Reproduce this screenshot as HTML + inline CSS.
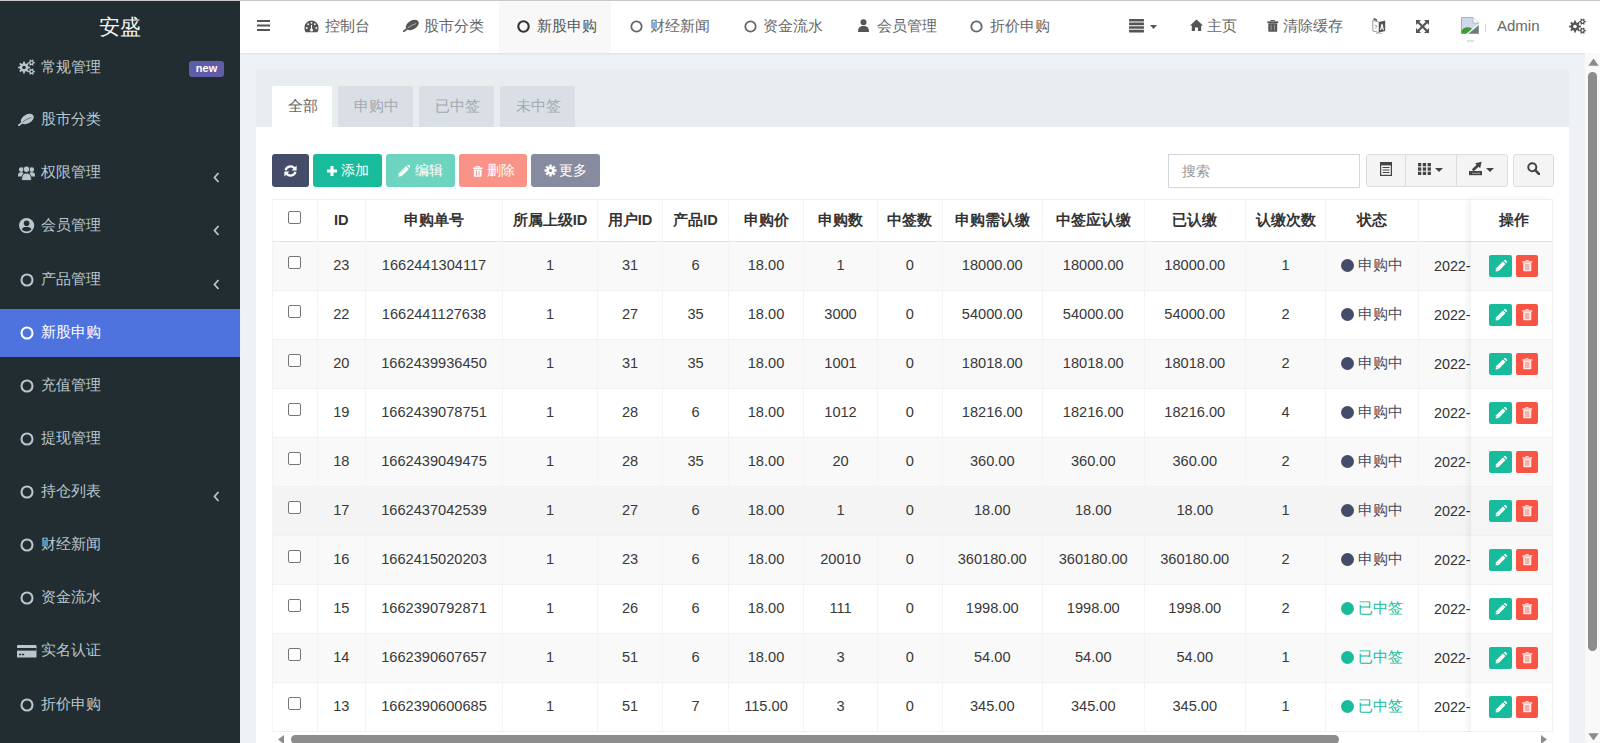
<!DOCTYPE html><html><head><meta charset="utf-8"><style>
*{box-sizing:border-box}
body{margin:0;width:1600px;height:743px;overflow:hidden;position:relative;background:#eef1f5;font-family:"Liberation Sans",sans-serif;color:#333}
.a{position:absolute}
.topline{left:0;top:0;width:1600px;height:1px;background:#c9c9c9;z-index:50}
#side{left:0;top:0;width:240px;height:743px;background:#222d32}
.logo{left:0;top:12px;width:240px;text-align:center;color:#f2f2f2;font-size:21px;line-height:28px}
.mi{left:0;width:240px;height:49px;color:#b8c7ce;font-size:15px;line-height:49px}
.mi.act{background:#4e73df;color:#fff}
.actbg{left:0;top:309px;width:240px;height:48px;background:#4e73df}
.mi.act{background:transparent}
.mi .ic{position:absolute;left:18px;top:0;height:49px;display:flex;align-items:center}
.mi .tx{position:absolute;left:41px;top:-1px}
.mi .chev{position:absolute;left:211px;top:0}
.badge{position:absolute;left:189px;top:18px;width:35px;height:16px;background:#605ca8;color:#fff;border-radius:3px;font-size:11px;font-weight:bold;line-height:15px;text-align:center}
#hdr{left:240px;top:0;width:1360px;height:53px;background:#fff;box-shadow:0 1px 2px rgba(0,0,0,.08)}
.hn{top:0;height:53px;line-height:52px;color:#666;font-size:15px}
.hn svg{position:absolute}
#panel{left:256px;top:69px;width:1313px;height:700px;background:#fff}
#ph{left:256px;top:69px;width:1313px;height:58px;background:#e8edf0}
.tab{top:86px;height:41px;background:#d9dfe4;color:#a0a9b1;border-radius:2px 2px 0 0;font-size:15px;line-height:39px;text-align:center;padding-left:2px}
.tab.act{background:#fff;color:#666}
.btn{top:154px;height:33px;border-radius:3px;color:#fff;font-size:14px;line-height:33px;text-align:center}
.cell{position:absolute;text-align:center;font-size:14.6px;color:#383838;transform:scaleY(1.06);transform-origin:50% 56%}
.hcell{position:absolute;text-align:center;font-size:14.6px;font-weight:bold;color:#333}
.vl{position:absolute;width:1px;background:#f4f4f4}
.hl{position:absolute;height:1px;background:#ebebeb}
</style></head><body>
<div class="a topline"></div>

<div class="a" id="side">
<div class="a logo" style="top:13px">安盛</div>
<div class="a actbg"></div>
<div class="a mi" style="top:42.5px"><span class="ic"><svg width="17" height="16" viewBox="0 0 17 16" style="margin-top:0px"><polygon points="10.20,7.58 11.94,7.68 11.94,9.32 10.20,9.42 9.62,10.82 10.78,12.12 9.62,13.28 8.32,12.12 6.92,12.70 6.82,14.44 5.18,14.44 5.08,12.70 3.68,12.12 2.38,13.28 1.22,12.12 2.38,10.82 1.80,9.42 0.06,9.32 0.06,7.68 1.80,7.58 2.38,6.18 1.22,4.88 2.38,3.72 3.68,4.88 5.08,4.30 5.18,2.56 6.82,2.56 6.92,4.30 8.32,4.88 9.62,3.72 10.78,4.88 9.62,6.18" fill="#b8c7ce"/><circle cx="6" cy="8.5" r="1.8" fill="#222d32"/><polygon points="15.80,2.92 16.84,2.98 16.84,4.22 15.80,4.28 15.24,5.25 15.71,6.19 14.63,6.80 14.06,5.93 12.94,5.93 12.37,6.80 11.29,6.19 11.76,5.25 11.20,4.28 10.16,4.22 10.16,2.98 11.20,2.92 11.76,1.95 11.29,1.01 12.37,0.40 12.94,1.27 14.06,1.27 14.63,0.40 15.71,1.01 15.24,1.95" fill="#b8c7ce"/><circle cx="13.5" cy="3.6" r="1.1" fill="#222d32"/><polygon points="15.80,11.92 16.84,11.98 16.84,13.22 15.80,13.28 15.24,14.25 15.71,15.19 14.63,15.80 14.06,14.93 12.94,14.93 12.37,15.80 11.29,15.19 11.76,14.25 11.20,13.28 10.16,13.22 10.16,11.98 11.20,11.92 11.76,10.95 11.29,10.01 12.37,9.40 12.94,10.27 14.06,10.27 14.63,9.40 15.71,10.01 15.24,10.95" fill="#b8c7ce"/><circle cx="13.5" cy="12.6" r="1.1" fill="#222d32"/></svg></span><span class="tx">常规管理</span>
<span class="badge">new</span>
</div>
<div class="a mi" style="top:94.5px"><span class="ic"><svg width="16" height="13" viewBox="0 0 16 13" style="margin-top:1px"><ellipse cx="9.3" cy="6" rx="7" ry="4.4" transform="rotate(-30 9.3 6)" fill="#b8c7ce"/><path d="M0.9 12.2 L4.5 9.4" stroke="#b8c7ce" stroke-width="1.8" stroke-linecap="round"/><path d="M4.6 9.2 C7.2 7 10 5.6 13.2 4.6" fill="none" stroke="#222d32" stroke-width="0.8" opacity="0.7"/></svg></span><span class="tx">股市分类</span>
</div>
<div class="a mi" style="top:147.5px"><span class="ic"><svg width="17" height="16" viewBox="0 0 17 16" style="margin-top:1px"><circle cx="3.2" cy="4.6" r="2.3" fill="#b8c7ce"/><circle cx="13.8" cy="4.6" r="2.3" fill="#b8c7ce"/><path d="M0 11.5 C0 8 1 7.3 3.2 7.3 C4.4 7.3 5 7.6 5.4 8 L4.2 11.5Z" fill="#b8c7ce"/><path d="M17 11.5 C17 8 16 7.3 13.8 7.3 C12.6 7.3 12 7.6 11.6 8 L12.8 11.5Z" fill="#b8c7ce"/><circle cx="8.5" cy="4.3" r="3.2" fill="#b8c7ce" stroke="#222d32" stroke-width="0.8"/><path d="M3.6 15.5 C3.6 10 5 8.2 8.5 8.2 C12 8.2 13.4 10 13.4 15.5Z" fill="#b8c7ce" stroke="#222d32" stroke-width="0.8"/></svg></span><span class="tx">权限管理</span>
<span class="chev"><svg width="10" height="49" viewBox="0 0 10 49"><path d="M7.5 25 L3.5 29.5 L7.5 34" transform="translate(0,0)" fill="none" stroke="#b8c7ce" stroke-width="1.8"/></svg></span>
</div>
<div class="a mi" style="top:200.5px"><span class="ic"><svg width="16" height="16" viewBox="0 0 16 16" style="margin-left:0.5px;margin-top:2px"><circle cx="7.6" cy="7.6" r="7.6" fill="#b8c7ce"/><circle cx="7.6" cy="5.3" r="2.8" fill="#222d32"/><path d="M2.9 11.3 C3.3 9.2 5 8.9 7.6 8.9 C10.2 8.9 11.9 9.2 12.3 11.3 C11.6 12.8 9.8 13.4 7.6 13.4 C5.4 13.4 3.6 12.8 2.9 11.3Z" fill="#222d32"/></svg></span><span class="tx">会员管理</span>
<span class="chev"><svg width="10" height="49" viewBox="0 0 10 49"><path d="M7.5 25 L3.5 29.5 L7.5 34" transform="translate(0,0)" fill="none" stroke="#b8c7ce" stroke-width="1.8"/></svg></span>
</div>
<div class="a mi" style="top:254.5px"><span class="ic"><svg width="14" height="14" viewBox="0 0 14 14" style="margin-left:1.5px;margin-top:2px"><circle cx="7" cy="7" r="5.5" fill="none" stroke="#b8c7ce" stroke-width="2.1"/></svg></span><span class="tx">产品管理</span>
<span class="chev"><svg width="10" height="49" viewBox="0 0 10 49"><path d="M7.5 25 L3.5 29.5 L7.5 34" transform="translate(0,0)" fill="none" stroke="#b8c7ce" stroke-width="1.8"/></svg></span>
</div>
<div class="a mi act" style="top:307.5px"><span class="ic"><svg width="14" height="14" viewBox="0 0 14 14" style="margin-left:1.5px;margin-top:2px"><circle cx="7" cy="7" r="5.5" fill="none" stroke="#fff" stroke-width="2.1"/></svg></span><span class="tx">新股申购</span>
</div>
<div class="a mi" style="top:360.5px"><span class="ic"><svg width="14" height="14" viewBox="0 0 14 14" style="margin-left:1.5px;margin-top:2px"><circle cx="7" cy="7" r="5.5" fill="none" stroke="#b8c7ce" stroke-width="2.1"/></svg></span><span class="tx">充值管理</span>
</div>
<div class="a mi" style="top:413.5px"><span class="ic"><svg width="14" height="14" viewBox="0 0 14 14" style="margin-left:1.5px;margin-top:2px"><circle cx="7" cy="7" r="5.5" fill="none" stroke="#b8c7ce" stroke-width="2.1"/></svg></span><span class="tx">提现管理</span>
</div>
<div class="a mi" style="top:466.5px"><span class="ic"><svg width="14" height="14" viewBox="0 0 14 14" style="margin-left:1.5px;margin-top:2px"><circle cx="7" cy="7" r="5.5" fill="none" stroke="#b8c7ce" stroke-width="2.1"/></svg></span><span class="tx">持仓列表</span>
<span class="chev"><svg width="10" height="49" viewBox="0 0 10 49"><path d="M7.5 25 L3.5 29.5 L7.5 34" transform="translate(0,0)" fill="none" stroke="#b8c7ce" stroke-width="1.8"/></svg></span>
</div>
<div class="a mi" style="top:519.5px"><span class="ic"><svg width="14" height="14" viewBox="0 0 14 14" style="margin-left:1.5px;margin-top:2px"><circle cx="7" cy="7" r="5.5" fill="none" stroke="#b8c7ce" stroke-width="2.1"/></svg></span><span class="tx">财经新闻</span>
</div>
<div class="a mi" style="top:572.5px"><span class="ic"><svg width="14" height="14" viewBox="0 0 14 14" style="margin-left:1.5px;margin-top:2px"><circle cx="7" cy="7" r="5.5" fill="none" stroke="#b8c7ce" stroke-width="2.1"/></svg></span><span class="tx">资金流水</span>
</div>
<div class="a mi" style="top:625.5px"><span class="ic"><svg width="20" height="13" viewBox="0 0 20 13" style="margin-left:-1.5px;margin-top:2px"><rect x="0" y="0" width="19.5" height="12.6" rx="1.2" fill="#b8c7ce"/><rect x="0" y="3" width="19.5" height="2.6" fill="#222d32"/><rect x="2" y="8.8" width="2.2" height="1.4" fill="#222d32"/><rect x="5" y="8.8" width="2.2" height="1.4" fill="#222d32"/></svg></span><span class="tx">实名认证</span>
</div>
<div class="a mi" style="top:679.5px"><span class="ic"><svg width="14" height="14" viewBox="0 0 14 14" style="margin-left:1.5px;margin-top:2px"><circle cx="7" cy="7" r="5.5" fill="none" stroke="#b8c7ce" stroke-width="2.1"/></svg></span><span class="tx">折价申购</span>
</div>
</div>
<div class="a" id="hdr"></div>
<svg class="a" style="left:257px;top:20px" width="13" height="11" viewBox="0 0 13 11"><rect y="0" width="13" height="2" fill="#555"/><rect y="4.5" width="13" height="2" fill="#555"/><rect y="9" width="13" height="2" fill="#555"/></svg>
<div class="a" style="left:499px;top:1px;width:112px;height:52px;background:#f8f8f8"></div>
<svg class="a" style="left:304px;top:20px" width="15" height="13" viewBox="0 0 15 13"><path d="M7.5 0.5 A7 7 0 0 0 0.5 7.5 A7 7 0 0 0 1.4 11.8 Q1.7 12.3 2.3 12.3 L12.7 12.3 Q13.3 12.3 13.6 11.8 A7 7 0 0 0 14.5 7.5 A7 7 0 0 0 7.5 0.5Z" fill="#555"/><circle cx="7.5" cy="10" r="1.5" fill="#fff"/><path d="M7.5 10 L7.5 5" stroke="#fff" stroke-width="1.1"/><circle cx="2.8" cy="8" r="0.9" fill="#fff"/><circle cx="4.2" cy="4.2" r="0.9" fill="#fff"/><circle cx="7.5" cy="2.8" r="0.9" fill="#fff"/><circle cx="10.8" cy="4.2" r="0.9" fill="#fff"/><circle cx="12.2" cy="8" r="0.9" fill="#fff"/></svg>
<div class="a hn" style="left:325px;color:#666">控制台</div>
<span class="a" style="left:403px;top:19px"><svg width="16" height="13" viewBox="0 0 16 13" style="display:block"><ellipse cx="9.3" cy="6" rx="7" ry="4.4" transform="rotate(-30 9.3 6)" fill="#555"/><path d="M0.9 12.2 L4.5 9.4" stroke="#555" stroke-width="1.8" stroke-linecap="round"/><path d="M4.6 9.2 C7.2 7 10 5.6 13.2 4.6" fill="none" stroke="#fff" stroke-width="0.8" opacity="0.7"/></svg></span>
<div class="a hn" style="left:424px;color:#666">股市分类</div>
<svg class="a" style="left:517.0px;top:19.5px" width="13" height="13" viewBox="0 0 13 13"><circle cx="6.5" cy="6.5" r="5.2" fill="none" stroke="#333" stroke-width="2.1"/></svg>
<div class="a hn" style="left:537px;color:#555">新股申购</div>
<svg class="a" style="left:629.5px;top:19.5px" width="13" height="13" viewBox="0 0 13 13"><circle cx="6.5" cy="6.5" r="5.2" fill="none" stroke="#666" stroke-width="1.8"/></svg>
<div class="a hn" style="left:650px;color:#666">财经新闻</div>
<svg class="a" style="left:743.5px;top:19.5px" width="13" height="13" viewBox="0 0 13 13"><circle cx="6.5" cy="6.5" r="5.2" fill="none" stroke="#666" stroke-width="1.8"/></svg>
<div class="a hn" style="left:763px;color:#666">资金流水</div>
<svg class="a" style="left:858px;top:19px" width="11" height="13" viewBox="0 0 11 13"><circle cx="5.5" cy="3.2" r="3" fill="#555"/><path d="M0 13 C0 8.5 2 7 5.5 7 C9 7 11 8.5 11 13Z" fill="#555"/></svg>
<div class="a hn" style="left:877px;color:#666">会员管理</div>
<svg class="a" style="left:969.5px;top:19.5px" width="13" height="13" viewBox="0 0 13 13"><circle cx="6.5" cy="6.5" r="5.2" fill="none" stroke="#666" stroke-width="1.8"/></svg>
<div class="a hn" style="left:990px;color:#666">折价申购</div>
<svg class="a" style="left:1128.5px;top:18.5px" width="15" height="14" viewBox="0 0 15 14"><g fill="#555"><rect y="0" width="15" height="2.6" rx="0.6"/><rect y="3.6" width="15" height="2.6" rx="0.6"/><rect y="7.2" width="15" height="2.6" rx="0.6"/><rect y="10.8" width="15" height="2.6" rx="0.6"/></g></svg>
<svg class="a" style="left:1150px;top:25px" width="7" height="4" viewBox="0 0 7 4"><path d="M0 0 L7 0 L3.5 4Z" fill="#555"/></svg>
<svg class="a" style="left:1190px;top:19px" width="13" height="12" viewBox="0 0 13 12"><path d="M6.5 0.5 L0 6.5 L1.8 6.5 L1.8 12 L5 12 L5 8.5 L8 8.5 L8 12 L11.2 12 L11.2 6.5 L13 6.5Z" fill="#555"/></svg>
<div class="a hn" style="left:1207px;color:#666">主页</div>
<svg class="a" style="left:1267px;top:20px" width="12" height="12" viewBox="0 0 12 12"><path d="M3.8 1.5 L3.8 0.4 L7.7 0.4 L7.7 1.5" fill="none" stroke="#555" stroke-width="1"/><rect x="0.3" y="1.4" width="11" height="1.6" fill="#555"/><path d="M1.3 3.2 L10.2 3.2 L10.2 11 Q10.2 11.8 9.4 11.8 L2.1 11.8 Q1.3 11.8 1.3 11Z" fill="#555"/><rect x="3.6" y="4.6" width="0.9" height="5.6" fill="#aaa"/><rect x="6.9" y="4.6" width="0.9" height="5.6" fill="#aaa"/></svg>
<div class="a hn" style="left:1283px;color:#666">清除缓存</div>
<svg class="a" style="left:1372px;top:18px" width="14" height="16" viewBox="0 0 14 16"><path d="M0.8 2.5 L7 4 L7 14.5 L0.8 13Z" fill="#fff" stroke="#9a9a9a" stroke-width="1"/><path d="M7 4 L13.2 2.5 L13.2 13 L7 14.5Z" fill="#555"/><path d="M1.5 0.8 L5 2.3" stroke="#555" stroke-width="1.6"/><path d="M2.5 7 L5 8 L3 10.5" fill="none" stroke="#9a9a9a" stroke-width="0.9"/><path d="M8.6 12 L10 6 L11.4 12 M9.1 10 L10.9 10" fill="none" stroke="#fff" stroke-width="1.1"/><path d="M4 15.5 Q7 16.5 10 15.5" fill="none" stroke="#aaa" stroke-width="0.8"/></svg>
<svg class="a" style="left:1416px;top:20px" width="13" height="13" viewBox="0 0 13 13"><g fill="#555"><path d="M0 0 L5 0 L3.3 1.7 L6.5 4.9 L9.7 1.7 L8 0 L13 0 L13 5 L11.3 3.3 L8.1 6.5 L11.3 9.7 L13 8 L13 13 L8 13 L9.7 11.3 L6.5 8.1 L3.3 11.3 L5 13 L0 13 L0 8 L1.7 9.7 L4.9 6.5 L1.7 3.3 L0 5Z"/></g></svg>
<svg class="a" style="left:1460px;top:16px" width="20" height="27" viewBox="0 0 20 27"><path d="M1.5 1.5 L13 1.5 L18.5 7 L18.5 17.5 L1.5 17.5Z" fill="#cdd9ec" stroke="#aab3bb" stroke-width="1"/><path d="M13 1.5 L13 7 L18.5 7" fill="#fff" stroke="#aab3bb" stroke-width="0.8"/><path d="M1.5 17.5 L1.5 14.5 C4 11 8 10.5 12 12.5 L8 17.5Z" fill="#3f9b35"/><path d="M8 17.5 L18.5 9 L18.5 17.5Z" fill="#6d7a80"/><path d="M6.5 18.5 L19 8" stroke="#eaf5e0" stroke-width="1.6"/><path d="M7 25 L14 25" stroke="#c9ced4" stroke-width="1.2"/></svg>
<div class="a" style="left:1485px;top:24px;width:1px;height:8px;background:#d6d6d6"></div>
<div class="a hn" style="left:1497px;color:#666">Admin</div>
<span class="a" style="left:1569px;top:18px"><svg width="17" height="16" viewBox="0 0 17 16" style="display:block"><polygon points="10.20,7.58 11.94,7.68 11.94,9.32 10.20,9.42 9.62,10.82 10.78,12.12 9.62,13.28 8.32,12.12 6.92,12.70 6.82,14.44 5.18,14.44 5.08,12.70 3.68,12.12 2.38,13.28 1.22,12.12 2.38,10.82 1.80,9.42 0.06,9.32 0.06,7.68 1.80,7.58 2.38,6.18 1.22,4.88 2.38,3.72 3.68,4.88 5.08,4.30 5.18,2.56 6.82,2.56 6.92,4.30 8.32,4.88 9.62,3.72 10.78,4.88 9.62,6.18" fill="#555"/><circle cx="6" cy="8.5" r="1.8" fill="#fff"/><polygon points="15.80,2.92 16.84,2.98 16.84,4.22 15.80,4.28 15.24,5.25 15.71,6.19 14.63,6.80 14.06,5.93 12.94,5.93 12.37,6.80 11.29,6.19 11.76,5.25 11.20,4.28 10.16,4.22 10.16,2.98 11.20,2.92 11.76,1.95 11.29,1.01 12.37,0.40 12.94,1.27 14.06,1.27 14.63,0.40 15.71,1.01 15.24,1.95" fill="#555"/><circle cx="13.5" cy="3.6" r="1.1" fill="#fff"/><polygon points="15.80,11.92 16.84,11.98 16.84,13.22 15.80,13.28 15.24,14.25 15.71,15.19 14.63,15.80 14.06,14.93 12.94,14.93 12.37,15.80 11.29,15.19 11.76,14.25 11.20,13.28 10.16,13.22 10.16,11.98 11.20,11.92 11.76,10.95 11.29,10.01 12.37,9.40 12.94,10.27 14.06,10.27 14.63,9.40 15.71,10.01 15.24,10.95" fill="#555"/><circle cx="13.5" cy="12.6" r="1.1" fill="#fff"/></svg></span>
<div class="a" id="panel"></div><div class="a" id="ph"></div>
<div class="a tab act" style="left:272px;width:60px">全部</div>
<div class="a tab" style="left:338px;width:75px">申购中</div>
<div class="a tab" style="left:419px;width:75px">已中签</div>
<div class="a tab" style="left:500px;width:75px">未中签</div>
<div class="a btn" style="left:272px;width:37px;background:#444c69"><svg style="position:absolute;left:12px;top:10.5px" width="13" height="12" viewBox="0 0 13 12"><path d="M1.6 5.2 A5 4.8 0 0 1 10.4 3.2" fill="none" stroke="#fff" stroke-width="2.3"/><path d="M12.6 0.4 L12.6 5.4 L7.6 5.4Z" fill="#fff"/><path d="M11.4 6.8 A5 4.8 0 0 1 2.6 8.8" fill="none" stroke="#fff" stroke-width="2.3"/><path d="M0.4 11.6 L0.4 6.6 L5.4 6.6Z" fill="#fff"/></svg></div>
<div class="a btn" style="left:313px;width:69px;background:#18bc9c"><svg style="position:absolute;left:14px;top:12px" width="10" height="10" viewBox="0 0 10 10"><path d="M3.5 0 L6.5 0 L6.5 3.5 L10 3.5 L10 6.5 L6.5 6.5 L6.5 10 L3.5 10 L3.5 6.5 L0 6.5 L0 3.5 L3.5 3.5Z" fill="#fff"/></svg><span style="position:absolute;left:28px">添加</span></div>
<div class="a btn" style="left:386px;width:69px;background:#6dd4c0"><svg style="position:absolute;left:12px;top:11px" width="12" height="12" viewBox="0 0 12 12"><path d="M0.3 11.7 L0.9 8.2 L8 1.1 L10.9 4 L3.8 11.1Z" fill="#fff"/><path d="M8.9 0.2 L9.6 -0.5 Q10.2 -0.9 10.8 -0.3 L12.3 1.2 Q12.9 1.8 12.5 2.4 L11.8 3.1Z" fill="#fff"/><path d="M2 8.6 L8.2 2.4" stroke="#6dd4c0" stroke-width="0.6"/></svg><span style="position:absolute;left:29px">编辑</span></div>
<div class="a btn" style="left:459px;width:68px;background:#f99287"><svg style="position:absolute;left:13.5px;top:11.5px" width="10" height="11" viewBox="0 0 10 11"><path d="M3 1.6 L3 0.3 L6.5 0.3 L6.5 1.6" fill="none" stroke="#fff" stroke-width="1"/><rect x="0" y="1.5" width="9.5" height="1.5" fill="#fff"/><path d="M0.9 3.4 L8.6 3.4 L8.6 10 Q8.6 10.8 7.8 10.8 L1.7 10.8 Q0.9 10.8 0.9 10Z" fill="#fff"/><rect x="3" y="4.6" width="0.9" height="5" fill="#f99287"/><rect x="5.6" y="4.6" width="0.9" height="5" fill="#f99287"/></svg><span style="position:absolute;left:27.5px">删除</span></div>
<div class="a btn" style="left:531px;width:69px;background:#878b9f"><svg style="position:absolute;left:13px;top:10px" width="13" height="13" viewBox="0 0 13 13"><g stroke="#fff" stroke-width="2.4"><line x1="6.5" y1="0.5" x2="6.5" y2="12.5"/><line x1="0.5" y1="6.5" x2="12.5" y2="6.5"/><line x1="2.3" y1="2.3" x2="10.7" y2="10.7"/><line x1="10.7" y1="2.3" x2="2.3" y2="10.7"/></g><circle cx="6.5" cy="6.5" r="3.8" fill="#fff"/><circle cx="6.5" cy="6.5" r="1.6" fill="#878b9f"/></svg><span style="position:absolute;left:28px">更多</span></div>
<div class="a" style="left:1168px;top:154px;width:192px;height:34px;border:1px solid #d2d6de;background:#fff;color:#999;font-size:14px;line-height:33px;padding-left:13px">搜索</div>
<div class="a" style="left:1366px;top:154px;width:142px;height:33px;border:1px solid #ddd;border-radius:3px;background:#f4f4f4"></div>
<div class="a" style="left:1405px;top:154px;width:1px;height:33px;background:#ddd"></div><div class="a" style="left:1456px;top:154px;width:1px;height:33px;background:#ddd"></div>
<div class="a" style="left:1513px;top:154px;width:41px;height:33px;border:1px solid #ddd;border-radius:3px;background:#f4f4f4"></div>
<svg class="a" style="left:1380px;top:162px" width="12" height="14" viewBox="0 0 12 14"><rect x="0.6" y="0.6" width="10.8" height="12.8" fill="none" stroke="#444" stroke-width="1.2"/><rect x="0.6" y="0.6" width="10.8" height="2.8" fill="#444"/><g fill="#444"><rect x="2.5" y="5" width="7" height="1"/><rect x="2.5" y="7.5" width="7" height="1"/><rect x="2.5" y="10" width="7" height="1"/></g></svg>
<svg class="a" style="left:1418px;top:163px" width="13" height="12" viewBox="0 0 13 12"><g fill="#444"><rect x="0" y="0" width="3.3" height="3.3"/><rect x="4.8" y="0" width="3.3" height="3.3"/><rect x="9.6" y="0" width="3.3" height="3.3"/><rect x="0" y="4.4" width="3.3" height="3.3"/><rect x="4.8" y="4.4" width="3.3" height="3.3"/><rect x="9.6" y="4.4" width="3.3" height="3.3"/><rect x="0" y="8.7" width="3.3" height="3.3"/><rect x="4.8" y="8.7" width="3.3" height="3.3"/><rect x="9.6" y="8.7" width="3.3" height="3.3"/></g></svg>
<svg class="a" style="left:1435px;top:168px" width="8" height="4" viewBox="0 0 8 4"><path d="M0 0 L8 0 L4 4Z" fill="#444"/></svg>
<svg class="a" style="left:1469px;top:161px" width="14" height="15" viewBox="0 0 14 15"><g fill="#444"><rect x="0" y="10" width="13" height="4.2"/><path d="M2.8 8.6 L7.6 3.8 L6.2 2.2 L12.6 0.8 L11.2 7.2 L9.6 5.8 L4.8 10.2Z"/></g><rect x="3" y="11.8" width="8" height="0.9" fill="#aaa"/></svg>
<svg class="a" style="left:1486px;top:168px" width="8" height="4" viewBox="0 0 8 4"><path d="M0 0 L8 0 L4 4Z" fill="#444"/></svg>
<svg class="a" style="left:1527px;top:162px" width="13" height="13" viewBox="0 0 13 13"><circle cx="5.3" cy="5.3" r="4" fill="none" stroke="#444" stroke-width="2"/><path d="M8.2 8.2 L12 12" stroke="#444" stroke-width="2.6" stroke-linecap="round"/></svg>
<div class="a" style="left:272px;top:199px;width:1281px;height:1px;background:#efefef"></div>
<div class="a" style="left:272px;top:241px;width:1281px;height:1px;background:#e2e2e2"></div>
<div class="a" style="left:272px;top:242px;width:1281px;height:48px;background:#f9f9f9"></div>
<div class="a" style="left:272px;top:290px;width:1281px;height:1px;background:#f1f1f1"></div>
<div class="a" style="left:272px;top:291px;width:1281px;height:48px;background:#fff"></div>
<div class="a" style="left:272px;top:339px;width:1281px;height:1px;background:#f1f1f1"></div>
<div class="a" style="left:272px;top:340px;width:1281px;height:48px;background:#f9f9f9"></div>
<div class="a" style="left:272px;top:388px;width:1281px;height:1px;background:#f1f1f1"></div>
<div class="a" style="left:272px;top:389px;width:1281px;height:48px;background:#fff"></div>
<div class="a" style="left:272px;top:437px;width:1281px;height:1px;background:#f1f1f1"></div>
<div class="a" style="left:272px;top:438px;width:1281px;height:48px;background:#f9f9f9"></div>
<div class="a" style="left:272px;top:486px;width:1281px;height:1px;background:#f1f1f1"></div>
<div class="a" style="left:272px;top:487px;width:1281px;height:48px;background:#f4f4f4"></div>
<div class="a" style="left:272px;top:535px;width:1281px;height:1px;background:#f1f1f1"></div>
<div class="a" style="left:272px;top:536px;width:1281px;height:48px;background:#f9f9f9"></div>
<div class="a" style="left:272px;top:584px;width:1281px;height:1px;background:#f1f1f1"></div>
<div class="a" style="left:272px;top:585px;width:1281px;height:48px;background:#fff"></div>
<div class="a" style="left:272px;top:633px;width:1281px;height:1px;background:#f1f1f1"></div>
<div class="a" style="left:272px;top:634px;width:1281px;height:48px;background:#f9f9f9"></div>
<div class="a" style="left:272px;top:682px;width:1281px;height:1px;background:#f1f1f1"></div>
<div class="a" style="left:272px;top:683px;width:1281px;height:48px;background:#fff"></div>
<div class="a" style="left:272px;top:731px;width:1281px;height:1px;background:#f1f1f1"></div>
<div class="a vl" style="left:272px;top:199px;height:544px"></div>
<div class="a vl" style="left:317px;top:199px;height:544px"></div>
<div class="a vl" style="left:365px;top:199px;height:544px"></div>
<div class="a vl" style="left:502px;top:199px;height:544px"></div>
<div class="a vl" style="left:597px;top:199px;height:544px"></div>
<div class="a vl" style="left:662px;top:199px;height:544px"></div>
<div class="a vl" style="left:728px;top:199px;height:544px"></div>
<div class="a vl" style="left:803px;top:199px;height:544px"></div>
<div class="a vl" style="left:877px;top:199px;height:544px"></div>
<div class="a vl" style="left:942px;top:199px;height:544px"></div>
<div class="a vl" style="left:1042px;top:199px;height:544px"></div>
<div class="a vl" style="left:1144px;top:199px;height:544px"></div>
<div class="a vl" style="left:1245px;top:199px;height:544px"></div>
<div class="a vl" style="left:1325px;top:199px;height:544px"></div>
<div class="a vl" style="left:1418px;top:199px;height:544px"></div>
<div class="a" style="left:288px;top:211px;width:13px;height:13px;border:1px solid #767676;border-radius:2px;background:#fff"></div>
<div class="hcell" style="left:317px;width:48.5px;top:199px;height:42px;line-height:42px">ID</div>
<div class="hcell" style="left:365.5px;width:137.0px;top:199px;height:42px;line-height:42px">申购单号</div>
<div class="hcell" style="left:502.5px;width:95.0px;top:199px;height:42px;line-height:42px">所属上级ID</div>
<div class="hcell" style="left:597.5px;width:65.0px;top:199px;height:42px;line-height:42px">用户ID</div>
<div class="hcell" style="left:662.5px;width:66.0px;top:199px;height:42px;line-height:42px">产品ID</div>
<div class="hcell" style="left:728.5px;width:75.0px;top:199px;height:42px;line-height:42px">申购价</div>
<div class="hcell" style="left:803.5px;width:74.0px;top:199px;height:42px;line-height:42px">申购数</div>
<div class="hcell" style="left:877.5px;width:64.5px;top:199px;height:42px;line-height:42px">中签数</div>
<div class="hcell" style="left:942px;width:100.5px;top:199px;height:42px;line-height:42px">申购需认缴</div>
<div class="hcell" style="left:1042.5px;width:101.5px;top:199px;height:42px;line-height:42px">中签应认缴</div>
<div class="hcell" style="left:1144px;width:101.5px;top:199px;height:42px;line-height:42px">已认缴</div>
<div class="hcell" style="left:1245.5px;width:80.0px;top:199px;height:42px;line-height:42px">认缴次数</div>
<div class="hcell" style="left:1325.5px;width:92.5px;top:199px;height:42px;line-height:42px">状态</div>
<div class="a" style="left:288px;top:256px;width:13px;height:13px;border:1px solid #767676;border-radius:2px;background:#fff"></div>
<div class="cell" style="left:317px;width:48.5px;top:241px;height:48px;line-height:48px">23</div>
<div class="cell" style="left:365.5px;width:137.0px;top:241px;height:48px;line-height:48px">1662441304117</div>
<div class="cell" style="left:502.5px;width:95.0px;top:241px;height:48px;line-height:48px">1</div>
<div class="cell" style="left:597.5px;width:65.0px;top:241px;height:48px;line-height:48px">31</div>
<div class="cell" style="left:662.5px;width:66.0px;top:241px;height:48px;line-height:48px">6</div>
<div class="cell" style="left:728.5px;width:75.0px;top:241px;height:48px;line-height:48px">18.00</div>
<div class="cell" style="left:803.5px;width:74.0px;top:241px;height:48px;line-height:48px">1</div>
<div class="cell" style="left:877.5px;width:64.5px;top:241px;height:48px;line-height:48px">0</div>
<div class="cell" style="left:942px;width:100.5px;top:241px;height:48px;line-height:48px">18000.00</div>
<div class="cell" style="left:1042.5px;width:101.5px;top:241px;height:48px;line-height:48px">18000.00</div>
<div class="cell" style="left:1144px;width:101.5px;top:241px;height:48px;line-height:48px">18000.00</div>
<div class="cell" style="left:1245.5px;width:80.0px;top:241px;height:48px;line-height:48px">1</div>
<div class="a" style="left:1341px;top:259px;width:13px;height:13px;border-radius:50%;background:#444c69"></div>
<div class="a" style="left:1358px;top:240.5px;line-height:48px;font-size:15.3px;color:#474b5c">申购中</div>
<div class="a" style="left:1434px;top:242px;line-height:48px;font-size:14.3px;color:#333">2022-</div>
<div class="a" style="left:288px;top:305px;width:13px;height:13px;border:1px solid #767676;border-radius:2px;background:#fff"></div>
<div class="cell" style="left:317px;width:48.5px;top:290px;height:48px;line-height:48px">22</div>
<div class="cell" style="left:365.5px;width:137.0px;top:290px;height:48px;line-height:48px">1662441127638</div>
<div class="cell" style="left:502.5px;width:95.0px;top:290px;height:48px;line-height:48px">1</div>
<div class="cell" style="left:597.5px;width:65.0px;top:290px;height:48px;line-height:48px">27</div>
<div class="cell" style="left:662.5px;width:66.0px;top:290px;height:48px;line-height:48px">35</div>
<div class="cell" style="left:728.5px;width:75.0px;top:290px;height:48px;line-height:48px">18.00</div>
<div class="cell" style="left:803.5px;width:74.0px;top:290px;height:48px;line-height:48px">3000</div>
<div class="cell" style="left:877.5px;width:64.5px;top:290px;height:48px;line-height:48px">0</div>
<div class="cell" style="left:942px;width:100.5px;top:290px;height:48px;line-height:48px">54000.00</div>
<div class="cell" style="left:1042.5px;width:101.5px;top:290px;height:48px;line-height:48px">54000.00</div>
<div class="cell" style="left:1144px;width:101.5px;top:290px;height:48px;line-height:48px">54000.00</div>
<div class="cell" style="left:1245.5px;width:80.0px;top:290px;height:48px;line-height:48px">2</div>
<div class="a" style="left:1341px;top:308px;width:13px;height:13px;border-radius:50%;background:#444c69"></div>
<div class="a" style="left:1358px;top:289.5px;line-height:48px;font-size:15.3px;color:#474b5c">申购中</div>
<div class="a" style="left:1434px;top:291px;line-height:48px;font-size:14.3px;color:#333">2022-</div>
<div class="a" style="left:288px;top:354px;width:13px;height:13px;border:1px solid #767676;border-radius:2px;background:#fff"></div>
<div class="cell" style="left:317px;width:48.5px;top:339px;height:48px;line-height:48px">20</div>
<div class="cell" style="left:365.5px;width:137.0px;top:339px;height:48px;line-height:48px">1662439936450</div>
<div class="cell" style="left:502.5px;width:95.0px;top:339px;height:48px;line-height:48px">1</div>
<div class="cell" style="left:597.5px;width:65.0px;top:339px;height:48px;line-height:48px">31</div>
<div class="cell" style="left:662.5px;width:66.0px;top:339px;height:48px;line-height:48px">35</div>
<div class="cell" style="left:728.5px;width:75.0px;top:339px;height:48px;line-height:48px">18.00</div>
<div class="cell" style="left:803.5px;width:74.0px;top:339px;height:48px;line-height:48px">1001</div>
<div class="cell" style="left:877.5px;width:64.5px;top:339px;height:48px;line-height:48px">0</div>
<div class="cell" style="left:942px;width:100.5px;top:339px;height:48px;line-height:48px">18018.00</div>
<div class="cell" style="left:1042.5px;width:101.5px;top:339px;height:48px;line-height:48px">18018.00</div>
<div class="cell" style="left:1144px;width:101.5px;top:339px;height:48px;line-height:48px">18018.00</div>
<div class="cell" style="left:1245.5px;width:80.0px;top:339px;height:48px;line-height:48px">2</div>
<div class="a" style="left:1341px;top:357px;width:13px;height:13px;border-radius:50%;background:#444c69"></div>
<div class="a" style="left:1358px;top:338.5px;line-height:48px;font-size:15.3px;color:#474b5c">申购中</div>
<div class="a" style="left:1434px;top:340px;line-height:48px;font-size:14.3px;color:#333">2022-</div>
<div class="a" style="left:288px;top:403px;width:13px;height:13px;border:1px solid #767676;border-radius:2px;background:#fff"></div>
<div class="cell" style="left:317px;width:48.5px;top:388px;height:48px;line-height:48px">19</div>
<div class="cell" style="left:365.5px;width:137.0px;top:388px;height:48px;line-height:48px">1662439078751</div>
<div class="cell" style="left:502.5px;width:95.0px;top:388px;height:48px;line-height:48px">1</div>
<div class="cell" style="left:597.5px;width:65.0px;top:388px;height:48px;line-height:48px">28</div>
<div class="cell" style="left:662.5px;width:66.0px;top:388px;height:48px;line-height:48px">6</div>
<div class="cell" style="left:728.5px;width:75.0px;top:388px;height:48px;line-height:48px">18.00</div>
<div class="cell" style="left:803.5px;width:74.0px;top:388px;height:48px;line-height:48px">1012</div>
<div class="cell" style="left:877.5px;width:64.5px;top:388px;height:48px;line-height:48px">0</div>
<div class="cell" style="left:942px;width:100.5px;top:388px;height:48px;line-height:48px">18216.00</div>
<div class="cell" style="left:1042.5px;width:101.5px;top:388px;height:48px;line-height:48px">18216.00</div>
<div class="cell" style="left:1144px;width:101.5px;top:388px;height:48px;line-height:48px">18216.00</div>
<div class="cell" style="left:1245.5px;width:80.0px;top:388px;height:48px;line-height:48px">4</div>
<div class="a" style="left:1341px;top:406px;width:13px;height:13px;border-radius:50%;background:#444c69"></div>
<div class="a" style="left:1358px;top:387.5px;line-height:48px;font-size:15.3px;color:#474b5c">申购中</div>
<div class="a" style="left:1434px;top:389px;line-height:48px;font-size:14.3px;color:#333">2022-</div>
<div class="a" style="left:288px;top:452px;width:13px;height:13px;border:1px solid #767676;border-radius:2px;background:#fff"></div>
<div class="cell" style="left:317px;width:48.5px;top:437px;height:48px;line-height:48px">18</div>
<div class="cell" style="left:365.5px;width:137.0px;top:437px;height:48px;line-height:48px">1662439049475</div>
<div class="cell" style="left:502.5px;width:95.0px;top:437px;height:48px;line-height:48px">1</div>
<div class="cell" style="left:597.5px;width:65.0px;top:437px;height:48px;line-height:48px">28</div>
<div class="cell" style="left:662.5px;width:66.0px;top:437px;height:48px;line-height:48px">35</div>
<div class="cell" style="left:728.5px;width:75.0px;top:437px;height:48px;line-height:48px">18.00</div>
<div class="cell" style="left:803.5px;width:74.0px;top:437px;height:48px;line-height:48px">20</div>
<div class="cell" style="left:877.5px;width:64.5px;top:437px;height:48px;line-height:48px">0</div>
<div class="cell" style="left:942px;width:100.5px;top:437px;height:48px;line-height:48px">360.00</div>
<div class="cell" style="left:1042.5px;width:101.5px;top:437px;height:48px;line-height:48px">360.00</div>
<div class="cell" style="left:1144px;width:101.5px;top:437px;height:48px;line-height:48px">360.00</div>
<div class="cell" style="left:1245.5px;width:80.0px;top:437px;height:48px;line-height:48px">2</div>
<div class="a" style="left:1341px;top:455px;width:13px;height:13px;border-radius:50%;background:#444c69"></div>
<div class="a" style="left:1358px;top:436.5px;line-height:48px;font-size:15.3px;color:#474b5c">申购中</div>
<div class="a" style="left:1434px;top:438px;line-height:48px;font-size:14.3px;color:#333">2022-</div>
<div class="a" style="left:288px;top:501px;width:13px;height:13px;border:1px solid #767676;border-radius:2px;background:#fff"></div>
<div class="cell" style="left:317px;width:48.5px;top:486px;height:48px;line-height:48px">17</div>
<div class="cell" style="left:365.5px;width:137.0px;top:486px;height:48px;line-height:48px">1662437042539</div>
<div class="cell" style="left:502.5px;width:95.0px;top:486px;height:48px;line-height:48px">1</div>
<div class="cell" style="left:597.5px;width:65.0px;top:486px;height:48px;line-height:48px">27</div>
<div class="cell" style="left:662.5px;width:66.0px;top:486px;height:48px;line-height:48px">6</div>
<div class="cell" style="left:728.5px;width:75.0px;top:486px;height:48px;line-height:48px">18.00</div>
<div class="cell" style="left:803.5px;width:74.0px;top:486px;height:48px;line-height:48px">1</div>
<div class="cell" style="left:877.5px;width:64.5px;top:486px;height:48px;line-height:48px">0</div>
<div class="cell" style="left:942px;width:100.5px;top:486px;height:48px;line-height:48px">18.00</div>
<div class="cell" style="left:1042.5px;width:101.5px;top:486px;height:48px;line-height:48px">18.00</div>
<div class="cell" style="left:1144px;width:101.5px;top:486px;height:48px;line-height:48px">18.00</div>
<div class="cell" style="left:1245.5px;width:80.0px;top:486px;height:48px;line-height:48px">1</div>
<div class="a" style="left:1341px;top:504px;width:13px;height:13px;border-radius:50%;background:#444c69"></div>
<div class="a" style="left:1358px;top:485.5px;line-height:48px;font-size:15.3px;color:#474b5c">申购中</div>
<div class="a" style="left:1434px;top:487px;line-height:48px;font-size:14.3px;color:#333">2022-</div>
<div class="a" style="left:288px;top:550px;width:13px;height:13px;border:1px solid #767676;border-radius:2px;background:#fff"></div>
<div class="cell" style="left:317px;width:48.5px;top:535px;height:48px;line-height:48px">16</div>
<div class="cell" style="left:365.5px;width:137.0px;top:535px;height:48px;line-height:48px">1662415020203</div>
<div class="cell" style="left:502.5px;width:95.0px;top:535px;height:48px;line-height:48px">1</div>
<div class="cell" style="left:597.5px;width:65.0px;top:535px;height:48px;line-height:48px">23</div>
<div class="cell" style="left:662.5px;width:66.0px;top:535px;height:48px;line-height:48px">6</div>
<div class="cell" style="left:728.5px;width:75.0px;top:535px;height:48px;line-height:48px">18.00</div>
<div class="cell" style="left:803.5px;width:74.0px;top:535px;height:48px;line-height:48px">20010</div>
<div class="cell" style="left:877.5px;width:64.5px;top:535px;height:48px;line-height:48px">0</div>
<div class="cell" style="left:942px;width:100.5px;top:535px;height:48px;line-height:48px">360180.00</div>
<div class="cell" style="left:1042.5px;width:101.5px;top:535px;height:48px;line-height:48px">360180.00</div>
<div class="cell" style="left:1144px;width:101.5px;top:535px;height:48px;line-height:48px">360180.00</div>
<div class="cell" style="left:1245.5px;width:80.0px;top:535px;height:48px;line-height:48px">2</div>
<div class="a" style="left:1341px;top:553px;width:13px;height:13px;border-radius:50%;background:#444c69"></div>
<div class="a" style="left:1358px;top:534.5px;line-height:48px;font-size:15.3px;color:#474b5c">申购中</div>
<div class="a" style="left:1434px;top:536px;line-height:48px;font-size:14.3px;color:#333">2022-</div>
<div class="a" style="left:288px;top:599px;width:13px;height:13px;border:1px solid #767676;border-radius:2px;background:#fff"></div>
<div class="cell" style="left:317px;width:48.5px;top:584px;height:48px;line-height:48px">15</div>
<div class="cell" style="left:365.5px;width:137.0px;top:584px;height:48px;line-height:48px">1662390792871</div>
<div class="cell" style="left:502.5px;width:95.0px;top:584px;height:48px;line-height:48px">1</div>
<div class="cell" style="left:597.5px;width:65.0px;top:584px;height:48px;line-height:48px">26</div>
<div class="cell" style="left:662.5px;width:66.0px;top:584px;height:48px;line-height:48px">6</div>
<div class="cell" style="left:728.5px;width:75.0px;top:584px;height:48px;line-height:48px">18.00</div>
<div class="cell" style="left:803.5px;width:74.0px;top:584px;height:48px;line-height:48px">111</div>
<div class="cell" style="left:877.5px;width:64.5px;top:584px;height:48px;line-height:48px">0</div>
<div class="cell" style="left:942px;width:100.5px;top:584px;height:48px;line-height:48px">1998.00</div>
<div class="cell" style="left:1042.5px;width:101.5px;top:584px;height:48px;line-height:48px">1998.00</div>
<div class="cell" style="left:1144px;width:101.5px;top:584px;height:48px;line-height:48px">1998.00</div>
<div class="cell" style="left:1245.5px;width:80.0px;top:584px;height:48px;line-height:48px">2</div>
<div class="a" style="left:1341px;top:602px;width:13px;height:13px;border-radius:50%;background:#18bc9c"></div>
<div class="a" style="left:1358px;top:583.5px;line-height:48px;font-size:15.3px;color:#18bc9c">已中签</div>
<div class="a" style="left:1434px;top:585px;line-height:48px;font-size:14.3px;color:#333">2022-</div>
<div class="a" style="left:288px;top:648px;width:13px;height:13px;border:1px solid #767676;border-radius:2px;background:#fff"></div>
<div class="cell" style="left:317px;width:48.5px;top:633px;height:48px;line-height:48px">14</div>
<div class="cell" style="left:365.5px;width:137.0px;top:633px;height:48px;line-height:48px">1662390607657</div>
<div class="cell" style="left:502.5px;width:95.0px;top:633px;height:48px;line-height:48px">1</div>
<div class="cell" style="left:597.5px;width:65.0px;top:633px;height:48px;line-height:48px">51</div>
<div class="cell" style="left:662.5px;width:66.0px;top:633px;height:48px;line-height:48px">6</div>
<div class="cell" style="left:728.5px;width:75.0px;top:633px;height:48px;line-height:48px">18.00</div>
<div class="cell" style="left:803.5px;width:74.0px;top:633px;height:48px;line-height:48px">3</div>
<div class="cell" style="left:877.5px;width:64.5px;top:633px;height:48px;line-height:48px">0</div>
<div class="cell" style="left:942px;width:100.5px;top:633px;height:48px;line-height:48px">54.00</div>
<div class="cell" style="left:1042.5px;width:101.5px;top:633px;height:48px;line-height:48px">54.00</div>
<div class="cell" style="left:1144px;width:101.5px;top:633px;height:48px;line-height:48px">54.00</div>
<div class="cell" style="left:1245.5px;width:80.0px;top:633px;height:48px;line-height:48px">1</div>
<div class="a" style="left:1341px;top:651px;width:13px;height:13px;border-radius:50%;background:#18bc9c"></div>
<div class="a" style="left:1358px;top:632.5px;line-height:48px;font-size:15.3px;color:#18bc9c">已中签</div>
<div class="a" style="left:1434px;top:634px;line-height:48px;font-size:14.3px;color:#333">2022-</div>
<div class="a" style="left:288px;top:697px;width:13px;height:13px;border:1px solid #767676;border-radius:2px;background:#fff"></div>
<div class="cell" style="left:317px;width:48.5px;top:682px;height:48px;line-height:48px">13</div>
<div class="cell" style="left:365.5px;width:137.0px;top:682px;height:48px;line-height:48px">1662390600685</div>
<div class="cell" style="left:502.5px;width:95.0px;top:682px;height:48px;line-height:48px">1</div>
<div class="cell" style="left:597.5px;width:65.0px;top:682px;height:48px;line-height:48px">51</div>
<div class="cell" style="left:662.5px;width:66.0px;top:682px;height:48px;line-height:48px">7</div>
<div class="cell" style="left:728.5px;width:75.0px;top:682px;height:48px;line-height:48px">115.00</div>
<div class="cell" style="left:803.5px;width:74.0px;top:682px;height:48px;line-height:48px">3</div>
<div class="cell" style="left:877.5px;width:64.5px;top:682px;height:48px;line-height:48px">0</div>
<div class="cell" style="left:942px;width:100.5px;top:682px;height:48px;line-height:48px">345.00</div>
<div class="cell" style="left:1042.5px;width:101.5px;top:682px;height:48px;line-height:48px">345.00</div>
<div class="cell" style="left:1144px;width:101.5px;top:682px;height:48px;line-height:48px">345.00</div>
<div class="cell" style="left:1245.5px;width:80.0px;top:682px;height:48px;line-height:48px">1</div>
<div class="a" style="left:1341px;top:700px;width:13px;height:13px;border-radius:50%;background:#18bc9c"></div>
<div class="a" style="left:1358px;top:681.5px;line-height:48px;font-size:15.3px;color:#18bc9c">已中签</div>
<div class="a" style="left:1434px;top:683px;line-height:48px;font-size:14.3px;color:#333">2022-</div>
<div class="a" style="left:1471px;top:199px;width:82px;height:544px;box-shadow:-3px 0 6px rgba(0,0,0,.06);background:#fff"></div>
<div class="a" style="left:1471px;top:199px;width:82px;height:1px;background:#efefef"></div>
<div class="a" style="left:1471px;top:241px;width:82px;height:1px;background:#e2e2e2"></div>
<div class="hcell" style="left:1473px;width:82px;top:199px;height:42px;line-height:42px">操作</div>
<div class="a" style="left:1471px;top:242px;width:82px;height:48px;background:#f9f9f9"></div>
<div class="a" style="left:1471px;top:290px;width:82px;height:1px;background:#f1f1f1"></div>
<div class="a" style="left:1489px;top:255px;width:23px;height:22px;border-radius:2px;background:#18bc9c"><svg style="position:absolute;left:5.5px;top:4.5px" width="12" height="12" viewBox="0 0 12 12"><path d="M0.6 11.4 L1.1 8.3 L7.9 1.5 L10.5 4.1 L3.7 10.9Z" fill="#fff"/><path d="M8.7 0.7 L9.5 -0.1 Q10 -0.5 10.5 0 L12 1.5 Q12.5 2 12.1 2.5 L11.3 3.3Z" fill="#fff"/><path d="M1.6 9.2 L2.8 10.4" stroke="#18bc9c" stroke-width="0.7"/></svg></div>
<div class="a" style="left:1516px;top:255px;width:21.5px;height:22px;border-radius:2px;background:#f75444"><svg style="position:absolute;left:5.5px;top:5px" width="11" height="12" viewBox="0 0 11 12"><path d="M3.8 1.3 L3.8 0.4 L6.2 0.4 L6.2 1.3" fill="none" stroke="#fde8e6" stroke-width="0.9"/><rect x="0.3" y="1.3" width="9.9" height="1.4" fill="#fde8e6"/><path d="M1.2 2.7 L9.3 2.7 L9.3 10.6 Q9.3 11.3 8.6 11.3 L1.9 11.3 Q1.2 11.3 1.2 10.6Z" fill="#fde8e6"/><rect x="3" y="4" width="4.5" height="6" fill="#f6b1a9"/></svg></div>
<div class="a" style="left:1471px;top:291px;width:82px;height:48px;background:#fff"></div>
<div class="a" style="left:1471px;top:339px;width:82px;height:1px;background:#f1f1f1"></div>
<div class="a" style="left:1489px;top:304px;width:23px;height:22px;border-radius:2px;background:#18bc9c"><svg style="position:absolute;left:5.5px;top:4.5px" width="12" height="12" viewBox="0 0 12 12"><path d="M0.6 11.4 L1.1 8.3 L7.9 1.5 L10.5 4.1 L3.7 10.9Z" fill="#fff"/><path d="M8.7 0.7 L9.5 -0.1 Q10 -0.5 10.5 0 L12 1.5 Q12.5 2 12.1 2.5 L11.3 3.3Z" fill="#fff"/><path d="M1.6 9.2 L2.8 10.4" stroke="#18bc9c" stroke-width="0.7"/></svg></div>
<div class="a" style="left:1516px;top:304px;width:21.5px;height:22px;border-radius:2px;background:#f75444"><svg style="position:absolute;left:5.5px;top:5px" width="11" height="12" viewBox="0 0 11 12"><path d="M3.8 1.3 L3.8 0.4 L6.2 0.4 L6.2 1.3" fill="none" stroke="#fde8e6" stroke-width="0.9"/><rect x="0.3" y="1.3" width="9.9" height="1.4" fill="#fde8e6"/><path d="M1.2 2.7 L9.3 2.7 L9.3 10.6 Q9.3 11.3 8.6 11.3 L1.9 11.3 Q1.2 11.3 1.2 10.6Z" fill="#fde8e6"/><rect x="3" y="4" width="4.5" height="6" fill="#f6b1a9"/></svg></div>
<div class="a" style="left:1471px;top:340px;width:82px;height:48px;background:#f9f9f9"></div>
<div class="a" style="left:1471px;top:388px;width:82px;height:1px;background:#f1f1f1"></div>
<div class="a" style="left:1489px;top:353px;width:23px;height:22px;border-radius:2px;background:#18bc9c"><svg style="position:absolute;left:5.5px;top:4.5px" width="12" height="12" viewBox="0 0 12 12"><path d="M0.6 11.4 L1.1 8.3 L7.9 1.5 L10.5 4.1 L3.7 10.9Z" fill="#fff"/><path d="M8.7 0.7 L9.5 -0.1 Q10 -0.5 10.5 0 L12 1.5 Q12.5 2 12.1 2.5 L11.3 3.3Z" fill="#fff"/><path d="M1.6 9.2 L2.8 10.4" stroke="#18bc9c" stroke-width="0.7"/></svg></div>
<div class="a" style="left:1516px;top:353px;width:21.5px;height:22px;border-radius:2px;background:#f75444"><svg style="position:absolute;left:5.5px;top:5px" width="11" height="12" viewBox="0 0 11 12"><path d="M3.8 1.3 L3.8 0.4 L6.2 0.4 L6.2 1.3" fill="none" stroke="#fde8e6" stroke-width="0.9"/><rect x="0.3" y="1.3" width="9.9" height="1.4" fill="#fde8e6"/><path d="M1.2 2.7 L9.3 2.7 L9.3 10.6 Q9.3 11.3 8.6 11.3 L1.9 11.3 Q1.2 11.3 1.2 10.6Z" fill="#fde8e6"/><rect x="3" y="4" width="4.5" height="6" fill="#f6b1a9"/></svg></div>
<div class="a" style="left:1471px;top:389px;width:82px;height:48px;background:#fff"></div>
<div class="a" style="left:1471px;top:437px;width:82px;height:1px;background:#f1f1f1"></div>
<div class="a" style="left:1489px;top:402px;width:23px;height:22px;border-radius:2px;background:#18bc9c"><svg style="position:absolute;left:5.5px;top:4.5px" width="12" height="12" viewBox="0 0 12 12"><path d="M0.6 11.4 L1.1 8.3 L7.9 1.5 L10.5 4.1 L3.7 10.9Z" fill="#fff"/><path d="M8.7 0.7 L9.5 -0.1 Q10 -0.5 10.5 0 L12 1.5 Q12.5 2 12.1 2.5 L11.3 3.3Z" fill="#fff"/><path d="M1.6 9.2 L2.8 10.4" stroke="#18bc9c" stroke-width="0.7"/></svg></div>
<div class="a" style="left:1516px;top:402px;width:21.5px;height:22px;border-radius:2px;background:#f75444"><svg style="position:absolute;left:5.5px;top:5px" width="11" height="12" viewBox="0 0 11 12"><path d="M3.8 1.3 L3.8 0.4 L6.2 0.4 L6.2 1.3" fill="none" stroke="#fde8e6" stroke-width="0.9"/><rect x="0.3" y="1.3" width="9.9" height="1.4" fill="#fde8e6"/><path d="M1.2 2.7 L9.3 2.7 L9.3 10.6 Q9.3 11.3 8.6 11.3 L1.9 11.3 Q1.2 11.3 1.2 10.6Z" fill="#fde8e6"/><rect x="3" y="4" width="4.5" height="6" fill="#f6b1a9"/></svg></div>
<div class="a" style="left:1471px;top:438px;width:82px;height:48px;background:#f9f9f9"></div>
<div class="a" style="left:1471px;top:486px;width:82px;height:1px;background:#f1f1f1"></div>
<div class="a" style="left:1489px;top:451px;width:23px;height:22px;border-radius:2px;background:#18bc9c"><svg style="position:absolute;left:5.5px;top:4.5px" width="12" height="12" viewBox="0 0 12 12"><path d="M0.6 11.4 L1.1 8.3 L7.9 1.5 L10.5 4.1 L3.7 10.9Z" fill="#fff"/><path d="M8.7 0.7 L9.5 -0.1 Q10 -0.5 10.5 0 L12 1.5 Q12.5 2 12.1 2.5 L11.3 3.3Z" fill="#fff"/><path d="M1.6 9.2 L2.8 10.4" stroke="#18bc9c" stroke-width="0.7"/></svg></div>
<div class="a" style="left:1516px;top:451px;width:21.5px;height:22px;border-radius:2px;background:#f75444"><svg style="position:absolute;left:5.5px;top:5px" width="11" height="12" viewBox="0 0 11 12"><path d="M3.8 1.3 L3.8 0.4 L6.2 0.4 L6.2 1.3" fill="none" stroke="#fde8e6" stroke-width="0.9"/><rect x="0.3" y="1.3" width="9.9" height="1.4" fill="#fde8e6"/><path d="M1.2 2.7 L9.3 2.7 L9.3 10.6 Q9.3 11.3 8.6 11.3 L1.9 11.3 Q1.2 11.3 1.2 10.6Z" fill="#fde8e6"/><rect x="3" y="4" width="4.5" height="6" fill="#f6b1a9"/></svg></div>
<div class="a" style="left:1471px;top:487px;width:82px;height:48px;background:#f5f5f5"></div>
<div class="a" style="left:1471px;top:535px;width:82px;height:1px;background:#f1f1f1"></div>
<div class="a" style="left:1489px;top:500px;width:23px;height:22px;border-radius:2px;background:#18bc9c"><svg style="position:absolute;left:5.5px;top:4.5px" width="12" height="12" viewBox="0 0 12 12"><path d="M0.6 11.4 L1.1 8.3 L7.9 1.5 L10.5 4.1 L3.7 10.9Z" fill="#fff"/><path d="M8.7 0.7 L9.5 -0.1 Q10 -0.5 10.5 0 L12 1.5 Q12.5 2 12.1 2.5 L11.3 3.3Z" fill="#fff"/><path d="M1.6 9.2 L2.8 10.4" stroke="#18bc9c" stroke-width="0.7"/></svg></div>
<div class="a" style="left:1516px;top:500px;width:21.5px;height:22px;border-radius:2px;background:#f75444"><svg style="position:absolute;left:5.5px;top:5px" width="11" height="12" viewBox="0 0 11 12"><path d="M3.8 1.3 L3.8 0.4 L6.2 0.4 L6.2 1.3" fill="none" stroke="#fde8e6" stroke-width="0.9"/><rect x="0.3" y="1.3" width="9.9" height="1.4" fill="#fde8e6"/><path d="M1.2 2.7 L9.3 2.7 L9.3 10.6 Q9.3 11.3 8.6 11.3 L1.9 11.3 Q1.2 11.3 1.2 10.6Z" fill="#fde8e6"/><rect x="3" y="4" width="4.5" height="6" fill="#f6b1a9"/></svg></div>
<div class="a" style="left:1471px;top:536px;width:82px;height:48px;background:#f9f9f9"></div>
<div class="a" style="left:1471px;top:584px;width:82px;height:1px;background:#f1f1f1"></div>
<div class="a" style="left:1489px;top:549px;width:23px;height:22px;border-radius:2px;background:#18bc9c"><svg style="position:absolute;left:5.5px;top:4.5px" width="12" height="12" viewBox="0 0 12 12"><path d="M0.6 11.4 L1.1 8.3 L7.9 1.5 L10.5 4.1 L3.7 10.9Z" fill="#fff"/><path d="M8.7 0.7 L9.5 -0.1 Q10 -0.5 10.5 0 L12 1.5 Q12.5 2 12.1 2.5 L11.3 3.3Z" fill="#fff"/><path d="M1.6 9.2 L2.8 10.4" stroke="#18bc9c" stroke-width="0.7"/></svg></div>
<div class="a" style="left:1516px;top:549px;width:21.5px;height:22px;border-radius:2px;background:#f75444"><svg style="position:absolute;left:5.5px;top:5px" width="11" height="12" viewBox="0 0 11 12"><path d="M3.8 1.3 L3.8 0.4 L6.2 0.4 L6.2 1.3" fill="none" stroke="#fde8e6" stroke-width="0.9"/><rect x="0.3" y="1.3" width="9.9" height="1.4" fill="#fde8e6"/><path d="M1.2 2.7 L9.3 2.7 L9.3 10.6 Q9.3 11.3 8.6 11.3 L1.9 11.3 Q1.2 11.3 1.2 10.6Z" fill="#fde8e6"/><rect x="3" y="4" width="4.5" height="6" fill="#f6b1a9"/></svg></div>
<div class="a" style="left:1471px;top:585px;width:82px;height:48px;background:#fff"></div>
<div class="a" style="left:1471px;top:633px;width:82px;height:1px;background:#f1f1f1"></div>
<div class="a" style="left:1489px;top:598px;width:23px;height:22px;border-radius:2px;background:#18bc9c"><svg style="position:absolute;left:5.5px;top:4.5px" width="12" height="12" viewBox="0 0 12 12"><path d="M0.6 11.4 L1.1 8.3 L7.9 1.5 L10.5 4.1 L3.7 10.9Z" fill="#fff"/><path d="M8.7 0.7 L9.5 -0.1 Q10 -0.5 10.5 0 L12 1.5 Q12.5 2 12.1 2.5 L11.3 3.3Z" fill="#fff"/><path d="M1.6 9.2 L2.8 10.4" stroke="#18bc9c" stroke-width="0.7"/></svg></div>
<div class="a" style="left:1516px;top:598px;width:21.5px;height:22px;border-radius:2px;background:#f75444"><svg style="position:absolute;left:5.5px;top:5px" width="11" height="12" viewBox="0 0 11 12"><path d="M3.8 1.3 L3.8 0.4 L6.2 0.4 L6.2 1.3" fill="none" stroke="#fde8e6" stroke-width="0.9"/><rect x="0.3" y="1.3" width="9.9" height="1.4" fill="#fde8e6"/><path d="M1.2 2.7 L9.3 2.7 L9.3 10.6 Q9.3 11.3 8.6 11.3 L1.9 11.3 Q1.2 11.3 1.2 10.6Z" fill="#fde8e6"/><rect x="3" y="4" width="4.5" height="6" fill="#f6b1a9"/></svg></div>
<div class="a" style="left:1471px;top:634px;width:82px;height:48px;background:#f9f9f9"></div>
<div class="a" style="left:1471px;top:682px;width:82px;height:1px;background:#f1f1f1"></div>
<div class="a" style="left:1489px;top:647px;width:23px;height:22px;border-radius:2px;background:#18bc9c"><svg style="position:absolute;left:5.5px;top:4.5px" width="12" height="12" viewBox="0 0 12 12"><path d="M0.6 11.4 L1.1 8.3 L7.9 1.5 L10.5 4.1 L3.7 10.9Z" fill="#fff"/><path d="M8.7 0.7 L9.5 -0.1 Q10 -0.5 10.5 0 L12 1.5 Q12.5 2 12.1 2.5 L11.3 3.3Z" fill="#fff"/><path d="M1.6 9.2 L2.8 10.4" stroke="#18bc9c" stroke-width="0.7"/></svg></div>
<div class="a" style="left:1516px;top:647px;width:21.5px;height:22px;border-radius:2px;background:#f75444"><svg style="position:absolute;left:5.5px;top:5px" width="11" height="12" viewBox="0 0 11 12"><path d="M3.8 1.3 L3.8 0.4 L6.2 0.4 L6.2 1.3" fill="none" stroke="#fde8e6" stroke-width="0.9"/><rect x="0.3" y="1.3" width="9.9" height="1.4" fill="#fde8e6"/><path d="M1.2 2.7 L9.3 2.7 L9.3 10.6 Q9.3 11.3 8.6 11.3 L1.9 11.3 Q1.2 11.3 1.2 10.6Z" fill="#fde8e6"/><rect x="3" y="4" width="4.5" height="6" fill="#f6b1a9"/></svg></div>
<div class="a" style="left:1471px;top:683px;width:82px;height:48px;background:#fff"></div>
<div class="a" style="left:1471px;top:731px;width:82px;height:1px;background:#f1f1f1"></div>
<div class="a" style="left:1489px;top:696px;width:23px;height:22px;border-radius:2px;background:#18bc9c"><svg style="position:absolute;left:5.5px;top:4.5px" width="12" height="12" viewBox="0 0 12 12"><path d="M0.6 11.4 L1.1 8.3 L7.9 1.5 L10.5 4.1 L3.7 10.9Z" fill="#fff"/><path d="M8.7 0.7 L9.5 -0.1 Q10 -0.5 10.5 0 L12 1.5 Q12.5 2 12.1 2.5 L11.3 3.3Z" fill="#fff"/><path d="M1.6 9.2 L2.8 10.4" stroke="#18bc9c" stroke-width="0.7"/></svg></div>
<div class="a" style="left:1516px;top:696px;width:21.5px;height:22px;border-radius:2px;background:#f75444"><svg style="position:absolute;left:5.5px;top:5px" width="11" height="12" viewBox="0 0 11 12"><path d="M3.8 1.3 L3.8 0.4 L6.2 0.4 L6.2 1.3" fill="none" stroke="#fde8e6" stroke-width="0.9"/><rect x="0.3" y="1.3" width="9.9" height="1.4" fill="#fde8e6"/><path d="M1.2 2.7 L9.3 2.7 L9.3 10.6 Q9.3 11.3 8.6 11.3 L1.9 11.3 Q1.2 11.3 1.2 10.6Z" fill="#fde8e6"/><rect x="3" y="4" width="4.5" height="6" fill="#f6b1a9"/></svg></div>
<div class="a" style="left:1552px;top:199px;width:1px;height:544px;background:#f0f0f0"></div>
<div class="a" style="left:272px;top:732px;width:1281px;height:11px;background:#fff"></div>
<div class="a" style="left:291px;top:735px;width:1048px;height:9px;border-radius:5px;background:#8c8c8c"></div>
<svg class="a" style="left:277px;top:735px" width="7" height="9" viewBox="0 0 7 9"><path d="M7 0 L7 9 L1 4.5Z" fill="#8c8c8c"/></svg>
<svg class="a" style="left:1541px;top:735px" width="7" height="9" viewBox="0 0 7 9"><path d="M0 0 L0 9 L6 4.5Z" fill="#8c8c8c"/></svg>
<div class="a" style="left:1585px;top:53px;width:15px;height:690px;background:#f9f9f9"></div>
<div class="a" style="left:1588px;top:72px;width:9px;height:579px;border-radius:5px;background:#8c8c8c"></div>
<svg class="a" style="left:1587.5px;top:58px" width="11" height="8" viewBox="0 0 11 8"><path d="M0.3 7.8 L10.7 7.8 L5.5 0.6Z" fill="#8c8c8c"/></svg>
<svg class="a" style="left:1587.5px;top:733px" width="11" height="8" viewBox="0 0 11 8"><path d="M0.3 0.2 L10.7 0.2 L5.5 7.4Z" fill="#8c8c8c"/></svg>
</body></html>
